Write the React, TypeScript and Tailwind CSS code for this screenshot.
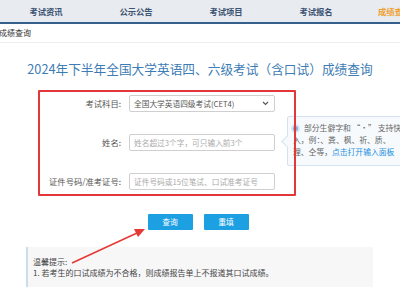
import React from "react";

const navItems = ["考试资讯", "公示公告", "考试项目", "考试报名"];

function Field({ label, children }: { label: string; children: React.ReactNode }) {
  return (
    <div className="flex items-center h-[17px]">
      <div className="w-[121px] text-right text-[8.3px] text-[#555]">{label}</div>
      <div className="ml-[8px] w-[146px] h-[17px]">{children}</div>
    </div>
  );
}

export default function App() {
  return (
    <div
      className="relative w-[400px] h-[300px] overflow-hidden bg-white"
      style={{ fontFamily: '"Noto Sans CJK SC", "Noto Sans", sans-serif' }}
    >
      {/* Top nav */}
      <div className="flex items-center h-[24px] bg-[#e8ebef] border-b-2 border-[#35608c] text-[8.3px] font-bold text-[#3b5272]">
        <div className="pl-[1px] flex">
          {navItems.map((n) => (
            <div key={n} className="w-[90px] text-center">
              {n}
            </div>
          ))}
        </div>
        <div className="pl-[17px] text-[#f0a030] whitespace-nowrap">成绩查询</div>
      </div>

      {/* Breadcrumb */}
      <div className="h-[19px] flex items-center border-b border-[#eeeeee] text-[8px] text-[#333] -ml-[1px]">
        成绩查询
      </div>

      {/* Title */}
      <h1 className="mt-[18px] text-center text-[12.7px] leading-[16px] text-[#3d7cb5]">
        2024年下半年全国大学英语四、六级考试（含口试）成绩查询
      </h1>

      {/* Form */}
      <div className="relative mt-[18px] flex flex-col gap-[22px]">
        <Field label="考试科目:">
          <div className="flex items-center justify-between h-full border border-[#cfcfcf] rounded-[2px] px-[4px] text-[7.7px] text-[#555]">
            <span>全国大学英语四级考试(CET4)</span>
            <svg width="7" height="5" viewBox="0 0 7 5" className="mr-[1px]">
              <path d="M1 1 L3.5 3.5 L6 1" fill="none" stroke="#555" strokeWidth="1.1" />
            </svg>
          </div>
        </Field>
        <Field label="姓名:">
          <div className="flex items-center h-full border border-[#cfcfcf] rounded-[2px] px-[4px] text-[7.7px] text-[#aaa]">
            姓名超过3个字，可只输入前3个
          </div>
        </Field>
        <Field label="证件号码/准考证号:">
          <div className="flex items-center h-full border border-[#cfcfcf] rounded-[2px] px-[4px] text-[7.7px] text-[#aaa]">
            证件号码或15位笔试、口试准考证号
          </div>
        </Field>

        {/* Tooltip */}
        <div className="absolute left-[287px] top-[21px] w-[130px] h-[50px] border border-[#d3e2ee] bg-[#f6fafd] rounded-[2px] px-[5px] pt-[5px] text-[7.8px] leading-[12px] text-[#666]">
          <div className="absolute -left-[5px] top-[20px] w-[9px] h-[9px] rotate-45 bg-[#f6fafd] border-l border-b border-[#d3e2ee]" />
          <div className="relative whitespace-nowrap">
            <span className="inline-block w-[5px] h-[5px] rounded-full bg-[#7fb0de] ring-2 ring-[#d6e6f5] mr-[6px] align-middle" />
            部分生僻字和 “·” 支持快捷输
          </div>
          <div className="relative whitespace-nowrap">入，例：、粪、枫、祈、质、</div>
          <div className="relative whitespace-nowrap">
            理、仝等，<span className="text-[#1e8fe0]">点击打开输入面板</span>
          </div>
        </div>
      </div>

      {/* Buttons */}
      <div className="mt-[24px] flex justify-center gap-[11px] pr-[4px]">
        <button className="w-[45px] h-[16px] bg-[#1ca0e2] text-white text-[7.8px] rounded-[1px]">查询</button>
        <button className="w-[45px] h-[16px] bg-[#1ca0e2] text-white text-[7.8px] rounded-[1px]">重填</button>
      </div>

      {/* Notice */}
      <div className="mt-[17px] ml-[26px] w-[347px] h-[40px] bg-[#f7f7f8] border-l-2 border-[#cddcec] pl-[5px] pt-[9px] text-[8px] leading-[11px] text-[#444]">
        <div>温馨提示:</div>
        <div>1. 若考生的口试成绩为不合格，则成绩报告单上不报道其口试成绩。</div>
      </div>

      {/* Annotation: red box */}
      <div className="absolute left-[38px] top-[90px] w-[258px] h-[106px] border-2 border-[#e2383a] rounded-[1px] pointer-events-none" />

      {/* Annotation: red arrow */}
      <svg className="absolute left-0 top-0 pointer-events-none" width="400" height="300">
        <line x1="72" y1="263" x2="137" y2="233" stroke="#e53935" strokeWidth="1.6" />
        <polygon points="145,229 134,229 138,237" fill="#e53935" />
      </svg>
    </div>
  );
}
